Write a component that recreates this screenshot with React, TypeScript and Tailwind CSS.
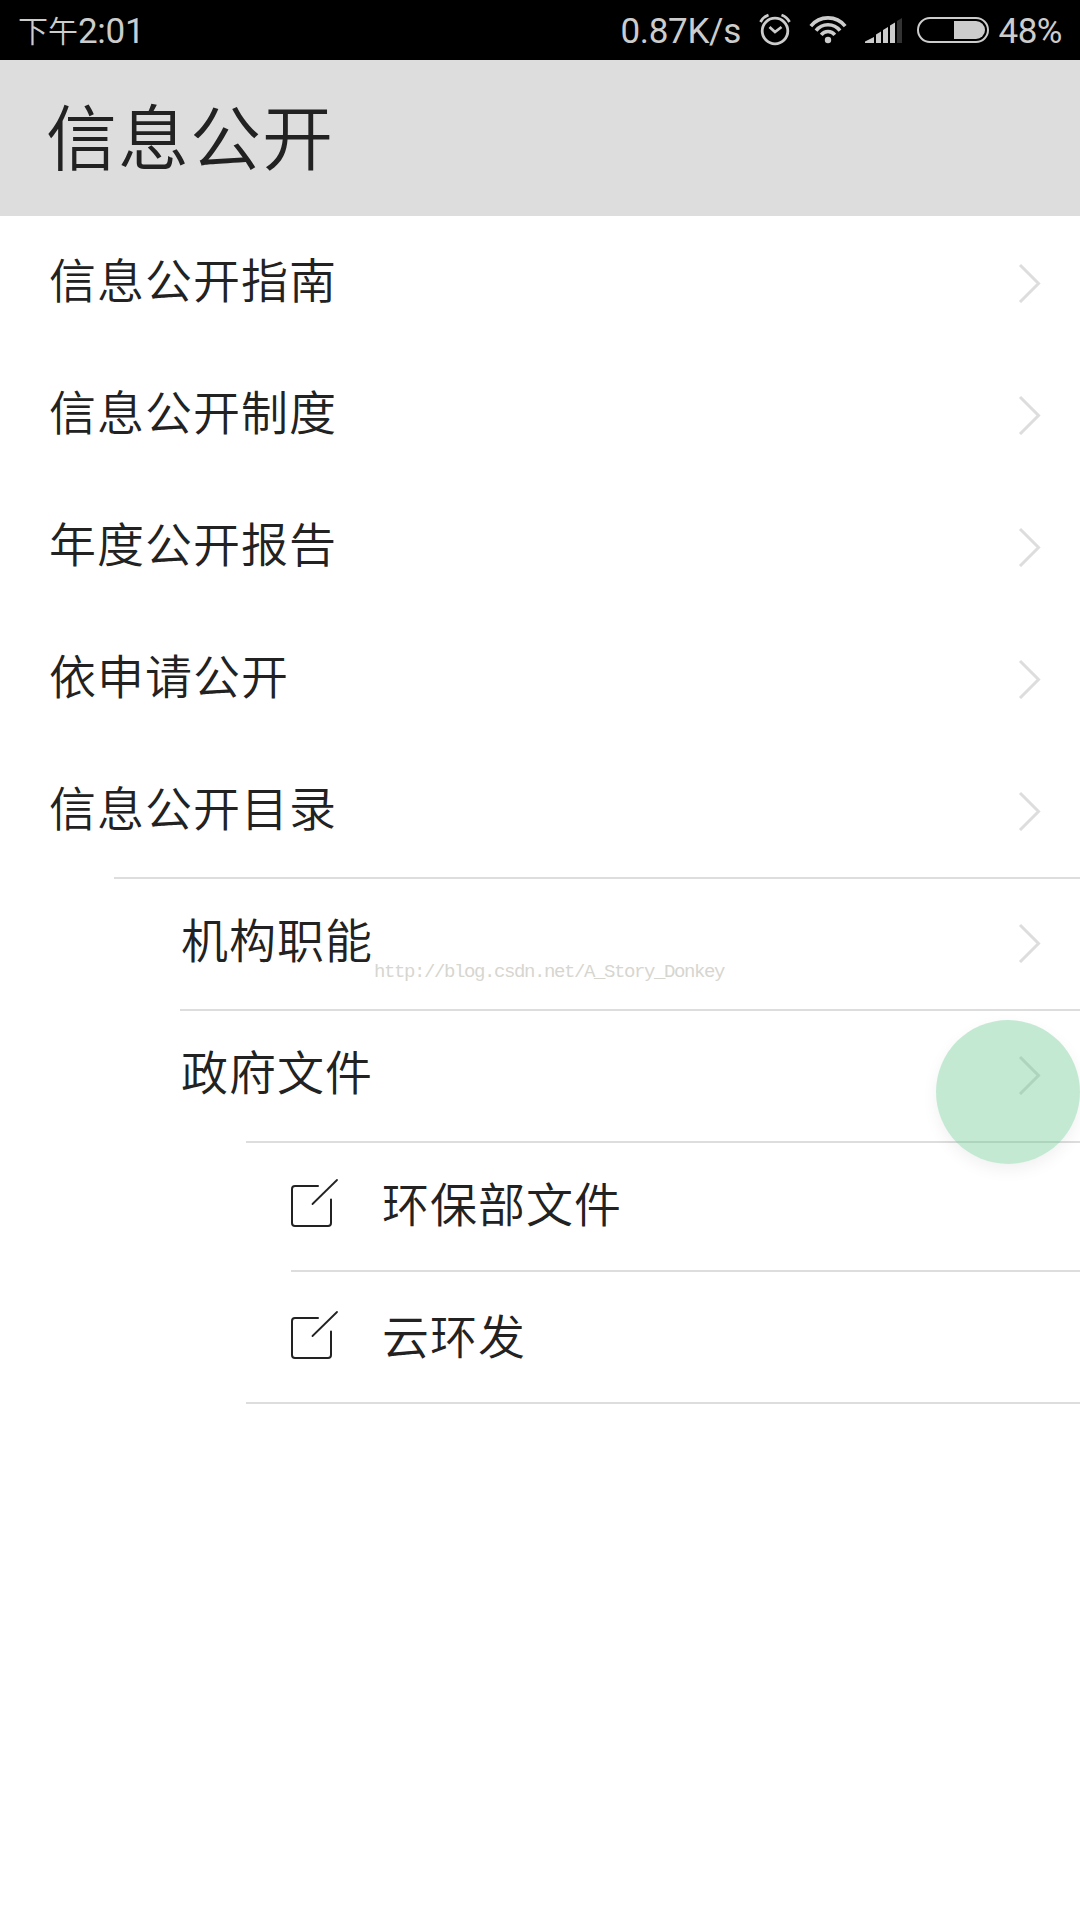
import type { ReactNode } from 'react'

const menu = ['信息公开指南', '信息公开制度', '年度公开报告', '依申请公开', '信息公开目录']

const files = ['环保部文件', '云环发']

function Chevron() {
  return (
    <svg className="mt-[46px] mr-[38px] h-[40px] w-[24px] shrink-0" viewBox="0 0 24 40" fill="none" stroke="#dddddd" strokeWidth="3">
      <path d="M2 2L20.500 20.500L2 39" />
    </svg>
  )
}

function EditIcon() {
  return (
    <svg className="mt-[37px] h-[50px] w-[48px] shrink-0" viewBox="0 0 48 50" fill="none" stroke="#222222" strokeWidth="2" strokeLinecap="round">
      <path d="M27 8H4a3 3 0 0 0-3 3V45a3 3 0 0 0 3 3h33a3 3 0 0 0 3-3V21.500" />
      <path d="M21.500 26L46 2" strokeWidth="1.8" />
    </svg>
  )
}

function Label({ children }: { children: ReactNode }) {
  return <span className="mt-[25px] text-[47px] leading-[72px] tracking-[1px]">{children}</span>
}

function StatusBar() {
  return (
    <div className="flex h-[60px] items-center bg-black pl-[18px] pr-[18px] text-[35px] leading-[60px] text-[#cccccc]">
      <div className="flex h-[60px] items-start">
        <span className="-mt-px text-[30px]">下午</span>
        <span className="mt-[2px] font-[Roboto] font-normal tracking-[-0.3px]">2:01</span>
      </div>
      <div className="ml-auto flex items-center">
        <span className="pt-[3px] font-[Roboto] font-normal tracking-[-0.3px]">0.87K/s</span>
        <svg className="ml-[17px] h-[34px] w-[34px]" viewBox="0 0 34 34" fill="none" stroke="#cccccc" strokeWidth="2.8">
          <circle cx="17" cy="18" r="12.8" />
          <path d="M11.500 14L17 19L23.500 14" />
          <path d="M2.500 9Q5 4 10.500 2M31.500 9Q29 4 23.500 2" />
        </svg>
        <svg className="ml-[16px] h-[32px] w-[40px]" viewBox="0 0 40 32" fill="none" stroke="#cccccc" strokeWidth="3.6">
          <path d="M2.800 12.200A22 22 0 0 1 37.200 12.200" />
          <path d="M8 16.600A15.200 15.200 0 0 1 32 16.600" />
          <path d="M13.200 20.800A8.700 8.700 0 0 1 26.800 20.800" />
          <circle cx="20" cy="26" r="3.2" fill="#cccccc" stroke="none" />
        </svg>
        <svg className="ml-[17px] h-[26px] w-[38px]" viewBox="0 0 38 26" fill="#cccccc">
          <path d="M0 26v-1.500L9 20v6zM11 26v-8.500l5-3V26zM18 26V13l5-3v16zM25 26V8.500l5-3V26z" />
          <path d="M32 26V4l5-3v25z" fill="#333333" />
        </svg>
        <svg className="ml-[14px] h-[26px] w-[72px]" viewBox="0 0 72 26">
          <rect x="1" y="1" width="70" height="24" rx="12" fill="none" stroke="#cccccc" strokeWidth="2" />
          <path d="M37 4h22a9 9 0 0 1 0 18H37z" fill="#cccccc" />
        </svg>
        <span className="w-[73px] pt-[3px] text-right font-[Roboto] font-normal tracking-[-0.5px]">48%</span>
      </div>
    </div>
  )
}

export default function App() {
  return (
    <div className="relative h-[1920px] w-[1080px] overflow-hidden bg-white font-['Noto_Sans_CJK_SC',sans-serif] font-[350] text-[#222222]">
      <StatusBar />

      <header className="h-[156px] bg-[#dddddd] pl-[46px] pt-[19px] text-[71px] leading-[108px] tracking-[1px]">
        <h1>信息公开</h1>
      </header>

      <main className="pt-px">
        {menu.map((title) => (
          <div key={title} className="flex h-[132px] items-start justify-between pl-[49px]">
            <Label>{title}</Label>
            <Chevron />
          </div>
        ))}

        {/* Expanded catalogue */}
        <div className="ml-[114px] flex h-[132px] items-start justify-between border-t-2 border-[#dddddd] pl-[67px]">
          <div className="-mt-0.5 flex">
            <Label>机构职能</Label>
          </div>
          <div className="-mt-0.5">
            <Chevron />
          </div>
        </div>
        <div className="ml-[180px] flex h-[132px] items-start justify-between border-t-2 border-[#dddddd] pl-px">
          <div className="-mt-0.5 flex">
            <Label>政府文件</Label>
          </div>
          <div className="-mt-0.5">
            <Chevron />
          </div>
        </div>

        {/* Files */}
        <div className="ml-[246px] border-y-2 border-[#dddddd] pl-[45px]">
          {files.map((name, i) => (
            <div
              key={name}
              className={`flex items-start gap-[43px] ${i === 0 ? '-mt-0.5 h-[129px]' : 'h-[132px] border-t-2 border-[#dddddd] pt-px'}`}
            >
              <EditIcon />
              <Label>{name}</Label>
            </div>
          ))}
        </div>
      </main>

      {/* Watermark */}
      <p className="absolute left-[374px] top-[960px] font-['Liberation_Mono'] text-[19px] leading-[24px] tracking-[-1.4px] text-[#d6d6cf]">
        http://blog.csdn.net/A_Story_Donkey
      </p>

      {/* Floating touch button */}
      <div className="absolute left-[936px] top-[1020px] h-[144px] w-[144px] rounded-full bg-[rgba(107,200,145,0.4)] shadow-[0_6px_16px_rgba(0,0,0,0.06)]" />
    </div>
  )
}
